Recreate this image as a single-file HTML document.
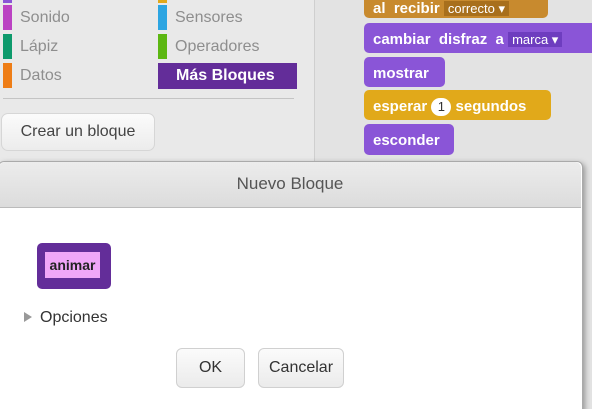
<!DOCTYPE html>
<html><head><style>
html,body{margin:0;width:592px;height:409px;overflow:hidden}
body{position:relative;background:#e9e9e9;font-family:"Liberation Sans",sans-serif}
.a{position:absolute}
.cat{position:absolute;font-size:16px;color:#8e8e8e}
.bar{position:absolute;width:9px;height:25px}
.blk{position:absolute;color:#fff;font-weight:bold;font-size:15px;border-radius:5px;box-sizing:border-box;padding-left:9px;line-height:33px}
</style></head><body>
<div class="a" style="left:314px;top:0;width:278px;height:409px;background:#e3e3e3;border-left:1px solid #cfcfcf"></div>
<div class="bar" style="left:3px;top:-22px;background:#8a55d7"></div>
<div class="bar" style="left:158px;top:-22px;background:#e1a91a"></div>
<div class="bar" style="left:3px;top:5px;background:#bb42c3"></div>
<div class="bar" style="left:3px;top:34px;background:#0e9a6c"></div>
<div class="bar" style="left:3px;top:63px;background:#ee7d16"></div>
<div class="bar" style="left:158px;top:5px;background:#2ca5e2"></div>
<div class="bar" style="left:158px;top:34px;background:#5cb712"></div>
<div class="a" style="left:158px;top:63px;width:139px;height:26px;background:#632d99"></div>
<div class="cat" style="left:20px;top:9px">Sonido</div>
<div class="cat" style="left:20px;top:38px">Lápiz</div>
<div class="cat" style="left:20px;top:67px">Datos</div>
<div class="cat" style="left:175px;top:9px">Sensores</div>
<div class="cat" style="left:175px;top:38px">Operadores</div>
<div class="cat" style="left:176px;top:67px;color:#fff;font-weight:bold">Más Bloques</div>
<div class="a" style="left:3px;top:98px;width:291px;height:1px;background:#c4c4c4"></div>
<div class="a" style="left:1px;top:113px;width:154px;height:38px;border:1px solid #d6d6d6;border-radius:7px;background:linear-gradient(#fbfbfb,#ececec);box-sizing:border-box;font-size:16px;color:#444;line-height:36px;text-align:center">Crear un bloque</div>

<div class="blk" style="left:364px;top:-10px;width:184px;background:#c88a2e;padding-top:10px;line-height:18px;height:28px">al&nbsp; recibir <span style="background:#a86f1c;font-weight:normal;font-size:13px;padding:0 4px">correcto ▾</span></div>
<div class="blk" style="left:364px;top:23px;width:240px;background:#8a55d7;height:30px">cambiar&nbsp; disfraz&nbsp; a <span style="background:#6e3dbf;font-weight:normal;font-size:13px;padding:0 4px">marca ▾</span></div>
<div class="blk" style="left:364px;top:57px;width:81px;background:#8a55d7;height:30px">mostrar</div>
<div class="blk" style="left:364px;top:90px;width:187px;background:#e1a91a;height:30px">esperar <span style="display:inline-block;background:#fff;color:#333;border-radius:9px;width:20px;height:18px;line-height:18px;text-align:center;font-weight:normal;font-size:13px">1</span> segundos</div>
<div class="blk" style="left:364px;top:124px;width:90px;background:#8a55d7;height:31px">esconder</div>

<div class="a" style="left:-2px;top:161px;width:583px;height:260px;background:#fff;border:1px solid #aaa;border-radius:6px;box-shadow:2px 2px 6px rgba(0,0,0,.35)"></div>
<div class="a" style="left:-1px;top:162px;width:582px;height:45px;background:linear-gradient(#ececec,#dcdcdc);border-bottom:1px solid #bbb;border-radius:6px 6px 0 0;text-align:center;line-height:44px;font-size:17px;color:#555">Nuevo Bloque</div>
<div class="a" style="left:37px;top:243px;width:74px;height:46px;background:#632d99;border-radius:5px"></div>
<div class="a" style="left:45px;top:252px;width:55px;height:26px;background:#f0a6f8;font-weight:bold;font-size:14px;line-height:26px;text-align:center;color:#222">animar</div>
<div class="a" style="left:24px;top:312px;width:0;height:0;border-left:8px solid #999;border-top:5px solid transparent;border-bottom:5px solid transparent"></div>
<div class="a" style="left:40px;top:309px;font-size:16px;color:#333">Opciones</div>
<div class="a" style="left:176px;top:348px;width:69px;height:40px;border:1px solid #d0d0d0;border-radius:6px;background:linear-gradient(#fbfbfb,#ebebeb);box-sizing:border-box;text-align:center;line-height:38px;font-size:16px;color:#333">OK</div>
<div class="a" style="left:258px;top:348px;width:86px;height:40px;border:1px solid #d0d0d0;border-radius:6px;background:linear-gradient(#fbfbfb,#ebebeb);box-sizing:border-box;text-align:center;line-height:38px;font-size:16px;color:#333">Cancelar</div>
</body></html>
